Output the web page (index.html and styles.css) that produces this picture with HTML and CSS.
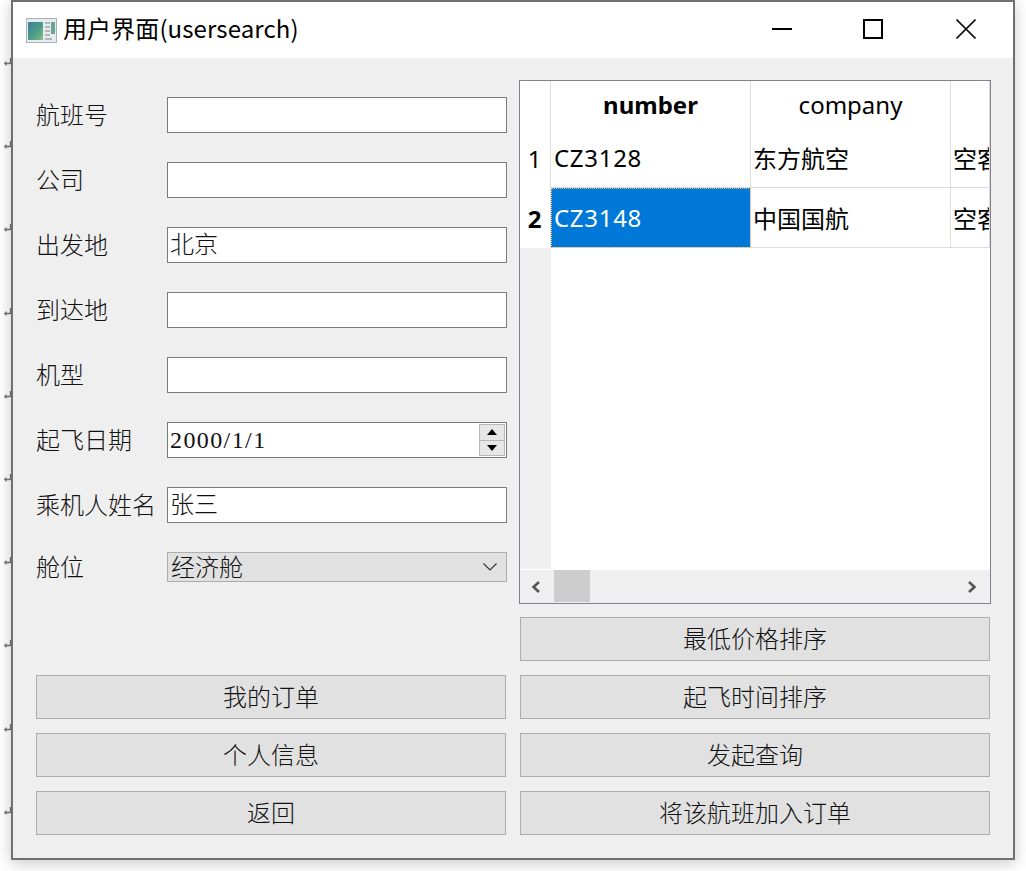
FILE: index.html
```html
<!DOCTYPE html>
<html lang="zh">
<head>
<meta charset="utf-8">
<title>用户界面(usersearch)</title>
<link rel="stylesheet" href="styles.css">
</head>
<body>
<div class="marks">
  <svg width="9" height="8" viewBox="0 0 9 8"><path d="M1 5.500h6.500M7.500 6V0M3 3.500v4" fill="none" stroke="#777" stroke-width="1.400"/></svg>
  <svg width="9" height="8" viewBox="0 0 9 8"><path d="M1 5.500h6.500M7.500 6V0M3 3.500v4" fill="none" stroke="#777" stroke-width="1.400"/></svg>
  <svg width="9" height="8" viewBox="0 0 9 8"><path d="M1 5.500h6.500M7.500 6V0M3 3.500v4" fill="none" stroke="#777" stroke-width="1.400"/></svg>
  <svg width="9" height="8" viewBox="0 0 9 8"><path d="M1 5.500h6.500M7.500 6V0M3 3.500v4" fill="none" stroke="#777" stroke-width="1.400"/></svg>
  <svg width="9" height="8" viewBox="0 0 9 8"><path d="M1 5.500h6.500M7.500 6V0M3 3.500v4" fill="none" stroke="#777" stroke-width="1.400"/></svg>
  <svg width="9" height="8" viewBox="0 0 9 8"><path d="M1 5.500h6.500M7.500 6V0M3 3.500v4" fill="none" stroke="#777" stroke-width="1.400"/></svg>
  <svg width="9" height="8" viewBox="0 0 9 8"><path d="M1 5.500h6.500M7.500 6V0M3 3.500v4" fill="none" stroke="#777" stroke-width="1.400"/></svg>
  <svg width="9" height="8" viewBox="0 0 9 8"><path d="M1 5.500h6.500M7.500 6V0M3 3.500v4" fill="none" stroke="#777" stroke-width="1.400"/></svg>
  <svg width="9" height="8" viewBox="0 0 9 8"><path d="M1 5.500h6.500M7.500 6V0M3 3.500v4" fill="none" stroke="#777" stroke-width="1.400"/></svg>
  <svg width="9" height="8" viewBox="0 0 9 8"><path d="M1 5.500h6.500M7.500 6V0M3 3.500v4" fill="none" stroke="#777" stroke-width="1.400"/></svg>
</div>
<div class="window">
  <header class="titlebar">
    <svg class="appicon" width="32" height="26" viewBox="0 0 32 26">
      <defs><linearGradient id="g" x1="0" y1="0" x2="1" y2="1"><stop offset="0" stop-color="#3f7f9f"/><stop offset="0.55" stop-color="#4f9c84"/><stop offset="1" stop-color="#7cc08a"/></linearGradient></defs>
      <rect x="0.5" y="0.5" width="30" height="24" fill="#e6ebef" stroke="#a9b0b6"/>
      <rect x="2" y="4" width="15" height="18" fill="url(#g)"/>
      <path d="M19 5h5M19 9h5M19 13h5M19 17h5M19 21h7" stroke="#a0a8ad" stroke-width="1.500"/>
      <rect x="25" y="4" width="4" height="12" fill="#6aa58c"/>
    </svg>
    <span class="wintitle">用户界面(usersearch)</span>
    <div class="winctrls">
      <svg class="ctl" width="20" height="20" viewBox="0 0 20 20"><path d="M0 10h20" stroke="#000" stroke-width="2"/></svg>
      <svg class="ctl" width="20" height="20" viewBox="0 0 20 20"><rect x="1" y="1" width="18" height="18" fill="none" stroke="#000" stroke-width="2"/></svg>
      <svg class="ctl" width="20" height="20" viewBox="0 0 20 20"><path d="M0.500 0.500l19 19M19.500 0.500l-19 19" stroke="#111" stroke-width="1.600"/></svg>
    </div>
  </header>
  <main class="content">
    <section class="left">
      <div class="form">
        <div class="row"><label>航班号</label><div class="field"></div></div>
        <div class="row"><label>公司</label><div class="field"></div></div>
        <div class="row"><label>出发地</label><div class="field">北京</div></div>
        <div class="row"><label>到达地</label><div class="field"></div></div>
        <div class="row"><label>机型</label><div class="field"></div></div>
        <div class="row"><label>起飞日期</label>
          <div class="field spin"><span class="date">2000/1/1</span>
            <div class="spinbtns">
              <span class="spinbtn"><svg width="12" height="7" viewBox="0 0 12 7"><path d="M6 0l6 7H0z" fill="#000"/></svg></span>
              <span class="spinbtn"><svg width="12" height="7" viewBox="0 0 12 7"><path d="M6 7l6-7H0z" fill="#000"/></svg></span>
            </div>
          </div>
        </div>
        <div class="row"><label>乘机人姓名</label><div class="field">张三</div></div>
        <div class="row short"><label>舱位</label>
          <div class="combo"><span>经济舱</span>
            <svg width="14" height="8" viewBox="0 0 14 8"><path d="M0.500 0.500L7 7l6.500-6.500" fill="none" stroke="#333" stroke-width="1.200"/></svg>
          </div>
        </div>
      </div>
      <div class="btns">
        <button class="btn">我的订单</button>
        <button class="btn">个人信息</button>
        <button class="btn">返回</button>
      </div>
    </section>
    <section class="right">
      <div class="tablebox">
        <div class="tablescroll">
          <table>
            <colgroup><col class="c0"><col class="c1"><col class="c1"><col class="c2"></colgroup>
            <thead>
              <tr><th class="corner"></th><th class="bold">number</th><th>company</th><th></th></tr>
            </thead>
            <tbody>
              <tr><th class="rh">1</th><td>CZ3128</td><td class="cjk">东方航空</td><td class="cjk">空客</td></tr>
              <tr><th class="rh bold">2</th><td class="sel">CZ3148</td><td class="cjk">中国国航</td><td class="cjk">空客</td></tr>
            </tbody>
          </table>
        </div>
        <div class="hscroll">
          <svg class="arr" width="10" height="12" viewBox="0 0 10 12"><path d="M8 1L2.500 6 8 11" fill="none" stroke="#555" stroke-width="2.600"/></svg>
          <div class="thumb"></div>
          <svg class="arr end" width="10" height="12" viewBox="0 0 10 12"><path d="M2 1l5.500 5L2 11" fill="none" stroke="#555" stroke-width="2.600"/></svg>
        </div>
      </div>
      <div class="btns">
        <button class="btn">最低价格排序</button>
        <button class="btn">起飞时间排序</button>
        <button class="btn">发起查询</button>
        <button class="btn">将该航班加入订单</button>
      </div>
    </section>
  </main>
</div>
</body>
</html>
```
FILE: styles.css
```css
* { box-sizing: border-box; }
html, body { margin: 0; height: 100%; }
body {
  position: relative;
  width: 1026px;
  height: 871px;
  overflow: hidden;
  background: #fff;
  font-family: "Noto Sans CJK SC", sans-serif;
  font-size: 24px;
  color: #000;
}
.marks {
  position: absolute;
  left: 3px;
  top: 58px;
  width: 9px;
  display: flex;
  flex-direction: column;
  gap: 75.2px;
}
.marks svg { display: block; flex: none; }
.window {
  position: absolute;
  left: 11px;
  top: 0;
  width: 1004px;
  height: 860px;
  border: 2px solid #707070;
  background: #efefef;
  box-shadow: 0 3px 14px rgba(0,0,0,0.22);
  display: flex;
  flex-direction: column;
}
.titlebar {
  height: 56px;
  background: #fff;
  display: flex;
  align-items: center;
  padding-left: 13px;
  flex: none;
}
.appicon { flex: none; margin-right: 5px; margin-top: 1px; }
.wintitle { font-size: 24px; line-height: 52px; padding-bottom: 4px; letter-spacing: 0.1px; }
.winctrls { margin-left: auto; margin-bottom: 2px; display: flex; align-items: center; gap: 73px; padding-right: 37px; }
.winctrls .ctl:first-child { margin-right: -2px; }
.ctl { display: block; }
.content {
  flex: 1;
  display: flex;
  gap: 12px;
  padding: 22px 23px 23px 23px;
  min-height: 0;
}
.left { width: 471px; display: flex; flex-direction: column; padding-top: 17px; }
.form { display: flex; flex-direction: column; gap: 29px; }
.row { display: flex; align-items: center; height: 36px; }
.row.short { height: 30px; }
.row label {
  width: 131px;
  font-size: 24px;
  font-weight: 300;
  color: #111;
  flex: none;
  white-space: nowrap;
  padding-bottom: 4px;
}
.field {
  width: 340px;
  height: 36px;
  background: #fff;
  border: 1px solid #7a7a7a;
  padding-left: 2px;
  line-height: 30px;
  font-weight: 300;
  color: #111;
}
.spin { display: flex; align-items: center; position: relative; }
.date { font-family: "Liberation Serif", serif; font-size: 24px; letter-spacing: 1.4px; line-height: 34px; }
.spinbtns {
  margin-left: auto;
  margin-right: 1px;
  width: 26px;
  height: 32px;
  display: flex;
  flex-direction: column;
  border: 1px solid #b8b8b8;
  background: #e6e6e6;
}
.spinbtn {
  flex: 1;
  display: flex;
  align-items: center;
  justify-content: center;
}
.spinbtn + .spinbtn { border-top: 1px solid #b8b8b8; }
.spinbtn svg { display: block; width: 10px; height: 6px; }
.combo {
  width: 340px;
  height: 30px;
  background: #e1e1e1;
  border: 1px solid #adadad;
  display: flex;
  align-items: center;
  justify-content: space-between;
  padding: 0 9px 0 3px;
  font-weight: 300;
  color: #111;
  line-height: 26px;
}
.combo span { padding-bottom: 3px; }
.btns {
  margin-top: auto;
  display: flex;
  flex-direction: column;
  gap: 14px;
}
.btn {
  height: 44px;
  width: 100%;
  background: #e1e1e1;
  border: 1px solid #adadad;
  border-radius: 0;
  padding: 0 0 4px;
  font-family: "Noto Sans CJK SC", sans-serif;
  font-size: 24px;
  font-weight: 300;
  color: #111;
}
.left .btn { width: 470px; }
.right { width: 472px; display: flex; flex-direction: column; }
.right .btn { width: 470px; margin-left: 1px; }
.tablebox {
  height: 524px;
  flex: none;
  border: 1px solid #82828f;
  background: #fff;
  display: flex;
  flex-direction: column;
}
.tablescroll {
  height: 488px;
  overflow: hidden;
  background: linear-gradient(to right, #efefef 31px, #fff 31px);
}
table {
  table-layout: fixed;
  border-collapse: separate;
  border-spacing: 0;
  width: 470px;
  font-family: "Noto Sans", "Noto Sans CJK SC", sans-serif;
}
.c0 { width: 31px; }
.c1 { width: 200px; }
.c2 { width: 39px; }
thead th {
  height: 47px;
  font-weight: 400;
  font-size: 24px;
  background: #fff;
  border-right: 1px solid #dcdcdc;
  padding: 0;
  line-height: 47px;
}
thead th.corner { background: #fff; }
th.bold, .rh.bold { font-weight: 700; }
tbody tr:first-child td, tbody tr:first-child th { height: 60px; }
tbody tr:last-child td, tbody tr:last-child th { height: 60px; }
tbody td, tbody th {
  border-right: 1px solid #dcdcdc;
  border-bottom: 1px solid #dcdcdc;
  padding: 0 0 0 3px;
  font-size: 24px;
  white-space: nowrap;
  overflow: hidden;
  text-align: left;
  font-weight: 400;
  letter-spacing: 0.7px;
}
tbody td.cjk { letter-spacing: 0; padding-left: 2px; }
tbody th.rh { background: #fff; text-align: center; padding: 0; border-bottom: none; }
tbody th.rh.bold { font-weight: 700; }
td.cjk { font-family: "Noto Sans CJK SC", sans-serif; }
td.sel {
  background: #0078d7;
  color: #fff;
  outline: 1px dotted #e8b878;
  outline-offset: -1px;
}
.hscroll {
  height: 34px;
  background: #efefef;
  display: flex;
  align-items: center;
  flex: none;
  border-top: 1px solid #fff;
}
.arr { flex: none; margin-left: 11px; }
.arr.end { margin-left: auto; margin-right: 13px; }
.thumb { width: 36px; height: 32px; background: #cdcdcd; margin-left: 13px; align-self: flex-start; }
```
